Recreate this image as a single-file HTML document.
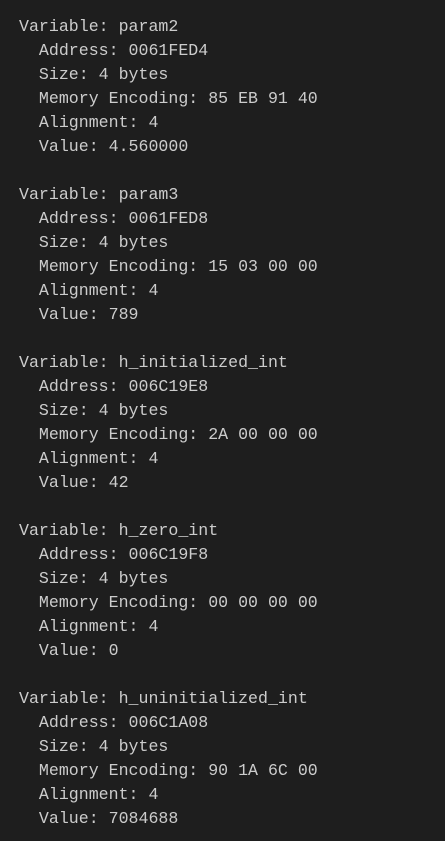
<!DOCTYPE html>
<html><head><style>
html,body{margin:0;padding:0;background:#1e1e1e;width:445px;height:841px;overflow:hidden}
pre{margin:0;position:absolute;left:19px;top:15px;font-family:"Liberation Mono",monospace;font-size:16.6px;line-height:24px;color:#cccccc}
</style></head><body><pre>Variable: param2
  Address: 0061FED4
  Size: 4 bytes
  Memory Encoding: 85 EB 91 40
  Alignment: 4
  Value: 4.560000

Variable: param3
  Address: 0061FED8
  Size: 4 bytes
  Memory Encoding: 15 03 00 00
  Alignment: 4
  Value: 789

Variable: h_initialized_int
  Address: 006C19E8
  Size: 4 bytes
  Memory Encoding: 2A 00 00 00
  Alignment: 4
  Value: 42

Variable: h_zero_int
  Address: 006C19F8
  Size: 4 bytes
  Memory Encoding: 00 00 00 00
  Alignment: 4
  Value: 0

Variable: h_uninitialized_int
  Address: 006C1A08
  Size: 4 bytes
  Memory Encoding: 90 1A 6C 00
  Alignment: 4
  Value: 7084688</pre></body></html>
